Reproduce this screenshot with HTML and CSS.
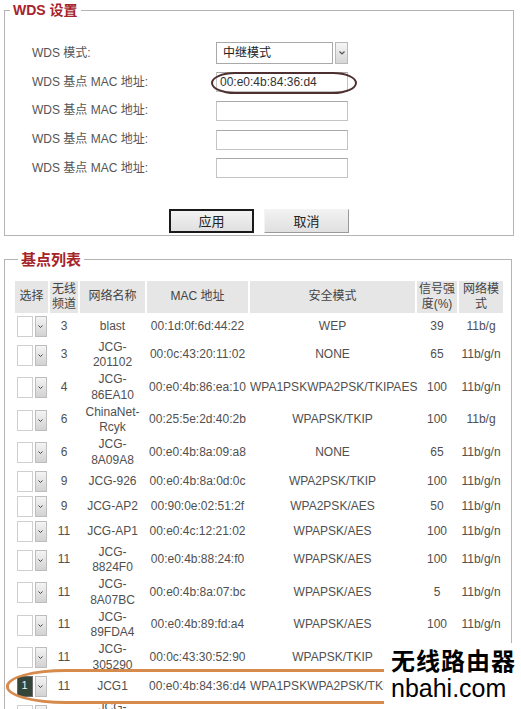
FILE: index.html
```html
<!DOCTYPE html>
<html lang="zh-CN">
<head>
<meta charset="utf-8">
<title>WDS 设置</title>
<link rel="stylesheet" href="styles.css">
</head>
<body>
<div class="page">
  <fieldset class="box box-wds">
    <legend class="legend">WDS 设置</legend>
    <div class="form">
      <span class="lbl">WDS 模式:</span>
      <span class="ctl"><span class="select"><span class="select-val">中继模式</span></span><span class="select-btn"><svg width="6" height="4" viewBox="0 0 6 4"><path d="M0.5 0.5 L3 3 L5.5 0.5" fill="none" stroke="#555" stroke-width="1.2"/></svg></span></span>
      <span class="lbl">WDS 基点 MAC 地址:</span>
      <span class="ctl"><span class="input">00:e0:4b:84:36:d4</span></span>
      <span class="lbl">WDS 基点 MAC 地址:</span>
      <span class="ctl"><span class="input"></span></span>
      <span class="lbl">WDS 基点 MAC 地址:</span>
      <span class="ctl"><span class="input"></span></span>
      <span class="lbl">WDS 基点 MAC 地址:</span>
      <span class="ctl"><span class="input"></span></span>
    </div>
    <div class="actions">
      <button class="btn btn-focus" type="button">应用</button>
      <button class="btn" type="button">取消</button>
    </div>
  </fieldset>

  <fieldset class="box box-list">
    <legend class="legend legend-lg">基点列表</legend>
    <table class="ap-table">
      <colgroup>
        <col class="c-sel"><col class="c-ch"><col class="c-name"><col class="c-mac"><col class="c-sec"><col class="c-sig"><col class="c-mode">
      </colgroup>
      <thead>
        <tr><th>选择</th><th>无线<br>频道</th><th>网络名称</th><th>MAC 地址</th><th>安全模式</th><th>信号强<br>度(%)</th><th>网络模<br>式</th></tr>
      </thead>
      <tbody>
        <tr><td><span class="rsel"><span class="rbox"></span><span class="rbtn"><svg width="5" height="3" viewBox="0 0 5 3"><path d="M0.5 0.5 L2.5 2.5 L4.5 0.5" fill="none" stroke="#444" stroke-width="1"/></svg></span></span></td><td>3</td><td>blast</td><td>00:1d:0f:6d:44:22</td><td>WEP</td><td>39</td><td>11b/g</td></tr>
        <tr><td><span class="rsel"><span class="rbox"></span><span class="rbtn"><svg width="5" height="3" viewBox="0 0 5 3"><path d="M0.5 0.5 L2.5 2.5 L4.5 0.5" fill="none" stroke="#444" stroke-width="1"/></svg></span></span></td><td>3</td><td>JCG-201102</td><td>00:0c:43:20:11:02</td><td>NONE</td><td>65</td><td>11b/g/n</td></tr>
        <tr><td><span class="rsel"><span class="rbox"></span><span class="rbtn"><svg width="5" height="3" viewBox="0 0 5 3"><path d="M0.5 0.5 L2.5 2.5 L4.5 0.5" fill="none" stroke="#444" stroke-width="1"/></svg></span></span></td><td>4</td><td>JCG-86EA10</td><td>00:e0:4b:86:ea:10</td><td class="nowrap">WPA1PSKWPA2PSK/TKIPAES</td><td>100</td><td>11b/g/n</td></tr>
        <tr><td><span class="rsel"><span class="rbox"></span><span class="rbtn"><svg width="5" height="3" viewBox="0 0 5 3"><path d="M0.5 0.5 L2.5 2.5 L4.5 0.5" fill="none" stroke="#444" stroke-width="1"/></svg></span></span></td><td>6</td><td>ChinaNet-Rcyk</td><td>00:25:5e:2d:40:2b</td><td>WPAPSK/TKIP</td><td>100</td><td>11b/g</td></tr>
        <tr><td><span class="rsel"><span class="rbox"></span><span class="rbtn"><svg width="5" height="3" viewBox="0 0 5 3"><path d="M0.5 0.5 L2.5 2.5 L4.5 0.5" fill="none" stroke="#444" stroke-width="1"/></svg></span></span></td><td>6</td><td>JCG-8A09A8</td><td>00:e0:4b:8a:09:a8</td><td>NONE</td><td>65</td><td>11b/g/n</td></tr>
        <tr><td><span class="rsel"><span class="rbox"></span><span class="rbtn"><svg width="5" height="3" viewBox="0 0 5 3"><path d="M0.5 0.5 L2.5 2.5 L4.5 0.5" fill="none" stroke="#444" stroke-width="1"/></svg></span></span></td><td>9</td><td>JCG-926</td><td>00:e0:4b:8a:0d:0c</td><td>WPA2PSK/TKIP</td><td>100</td><td>11b/g/n</td></tr>
        <tr><td><span class="rsel"><span class="rbox"></span><span class="rbtn"><svg width="5" height="3" viewBox="0 0 5 3"><path d="M0.5 0.5 L2.5 2.5 L4.5 0.5" fill="none" stroke="#444" stroke-width="1"/></svg></span></span></td><td>9</td><td>JCG-AP2</td><td>00:90:0e:02:51:2f</td><td>WPA2PSK/AES</td><td>50</td><td>11b/g/n</td></tr>
        <tr><td><span class="rsel"><span class="rbox"></span><span class="rbtn"><svg width="5" height="3" viewBox="0 0 5 3"><path d="M0.5 0.5 L2.5 2.5 L4.5 0.5" fill="none" stroke="#444" stroke-width="1"/></svg></span></span></td><td>11</td><td>JCG-AP1</td><td>00:e0:4c:12:21:02</td><td>WPAPSK/AES</td><td>100</td><td>11b/g/n</td></tr>
        <tr><td><span class="rsel"><span class="rbox"></span><span class="rbtn"><svg width="5" height="3" viewBox="0 0 5 3"><path d="M0.5 0.5 L2.5 2.5 L4.5 0.5" fill="none" stroke="#444" stroke-width="1"/></svg></span></span></td><td>11</td><td>JCG-8824F0</td><td>00:e0:4b:88:24:f0</td><td>WPAPSK/AES</td><td>100</td><td>11b/g/n</td></tr>
        <tr><td><span class="rsel"><span class="rbox"></span><span class="rbtn"><svg width="5" height="3" viewBox="0 0 5 3"><path d="M0.5 0.5 L2.5 2.5 L4.5 0.5" fill="none" stroke="#444" stroke-width="1"/></svg></span></span></td><td>11</td><td>JCG-8A07BC</td><td>00:e0:4b:8a:07:bc</td><td>WPAPSK/AES</td><td>5</td><td>11b/g/n</td></tr>
        <tr><td><span class="rsel"><span class="rbox"></span><span class="rbtn"><svg width="5" height="3" viewBox="0 0 5 3"><path d="M0.5 0.5 L2.5 2.5 L4.5 0.5" fill="none" stroke="#444" stroke-width="1"/></svg></span></span></td><td>11</td><td>JCG-89FDA4</td><td>00:e0:4b:89:fd:a4</td><td>WPAPSK/AES</td><td>100</td><td>11b/g/n</td></tr>
        <tr><td><span class="rsel"><span class="rbox"></span><span class="rbtn"><svg width="5" height="3" viewBox="0 0 5 3"><path d="M0.5 0.5 L2.5 2.5 L4.5 0.5" fill="none" stroke="#444" stroke-width="1"/></svg></span></span></td><td>11</td><td>JCG-305290</td><td>00:0c:43:30:52:90</td><td>WPAPSK/TKIP</td><td>100</td><td>11b/g/n</td></tr>
        <tr><td><span class="rsel"><span class="rbox rbox-on">1</span><span class="rbtn"><svg width="5" height="3" viewBox="0 0 5 3"><path d="M0.5 0.5 L2.5 2.5 L4.5 0.5" fill="none" stroke="#444" stroke-width="1"/></svg></span></span></td><td>11</td><td>JCG1</td><td>00:e0:4b:84:36:d4</td><td class="nowrap">WPA1PSKWPA2PSK/TKIPAES</td><td>100</td><td>11b/g/n</td></tr>
        <tr><td><span class="rsel"><span class="rbox"></span><span class="rbtn"><svg width="5" height="3" viewBox="0 0 5 3"><path d="M0.5 0.5 L2.5 2.5 L4.5 0.5" fill="none" stroke="#444" stroke-width="1"/></svg></span></span></td><td>11</td><td>JCG-8A0B1C</td><td>00:e0:4b:8a:0b:1c</td><td>WPAPSK/AES</td><td>100</td><td>11b/g/n</td></tr>
      </tbody>
    </table>
  </fieldset>

  <div class="mark mark-mac"></div>
  <div class="mark mark-row"></div>
  <div class="watermark">
    <div class="wm-cn">无线路由器</div>
    <div class="wm-en">nbahi.com</div>
  </div>
</div>
</body>
</html>
```

FILE: styles.css
```css
* { box-sizing: border-box; }
html, body { margin: 0; padding: 0; background: #fff; }
body {
  font-family: "Liberation Sans", "Noto Sans CJK SC", sans-serif;
  font-size: 12px;
  color: #4d4d4d;
}
.page { position: relative; width: 521px; height: 709px; overflow: hidden; }

.box {
  border: 1px solid #b4b4b4;
  margin: 2px 7px 0 4px;
  padding: 0;
  min-width: 0;
}
.legend {
  margin-left: 5px;
  padding: 0 3px;
  font-size: 14px;
  line-height: 16px;
  font-weight: bold;
  color: #a5242a;
}
.legend-lg { font-size: 15px; line-height: 18px; }

.form {
  display: grid;
  grid-template-columns: 184px 132px;
  grid-auto-rows: 28.75px;
  align-items: center;
  padding: 21px 0 0 27px;
}
.lbl { color: #555; white-space: nowrap; line-height: 15px; }
.ctl { display: flex; align-items: center; }
.select {
  width: 117px;
  height: 22px;
  border: 1px solid #a9a9a9;
  background: #fff;
  display: flex;
  align-items: center;
  padding-left: 6px;
  color: #222;
}
.select-val { line-height: 16px; }
.select-btn {
  margin-left: 2px;
  width: 13px;
  height: 22px;
  border: 1px solid #b9b9b9;
  background: linear-gradient(#f6f6f6, #d6d6d6);
  display: flex;
  align-items: center;
  justify-content: center;
}
.input {
  width: 132px;
  height: 20px;
  border: 1px solid #c4c4c4;
  border-top-color: #a8a8a8;
  background: #fff;
  color: #333;
  padding-left: 3px;
  line-height: 18px;
  font-size: 12px;
}

.actions {
  display: flex;
  justify-content: center;
  gap: 10px;
  margin-top: 26px;
  padding-bottom: 2px;
}
.btn {
  width: 85px;
  height: 24px;
  padding: 0;
  font-family: "Liberation Sans", "Noto Sans CJK SC", sans-serif;
  font-size: 13px;
  color: #222;
  background: linear-gradient(#f2f2f2, #e0e0e0);
  border: 1px solid;
  border-color: #f4f4f4 #9a9a9a #9a9a9a #f4f4f4;
}
.btn-focus { border: 2px solid #1a1a1a; }

.box-list { margin-top: 15px; margin-right: 9px; padding: 10px 0 0 8px; }
.ap-table {
  table-layout: fixed;
  border-collapse: separate;
  border-spacing: 2px;
  width: 492px;
}
.c-sel { width: 33px; }
.c-ch { width: 28px; }
.c-name { width: 65px; }
.c-mac { width: 101px; }
.c-sec { width: 165px; }
.c-sig { width: 40px; }
.c-mode { width: 44px; }
.ap-table th {
  background: #e6e6e6;
  font-weight: normal;
  color: #444;
  padding: 1px 0;
  line-height: 15px;
  text-align: center;
  vertical-align: middle;
}
.ap-table td {
  padding: 0;
  height: 23px;
  line-height: 15.25px;
  text-align: center;
  vertical-align: middle;
  color: #505050;
}
.ap-table td.nowrap { white-space: nowrap; overflow: visible; }

.rsel { display: inline-flex; gap: 2px; height: 21px; vertical-align: middle; }
.rbox {
  width: 16px;
  height: 21px;
  border: 1px solid #cfcfcf;
  background: #fff;
  font-size: 11px;
  line-height: 17px;
  text-align: center;
}
.rbox-on { background: #34453a; color: #f2f2f2; border-color: #6a6a6a; }
.rbtn {
  width: 12px;
  height: 21px;
  border: 1px solid #bdbdbd;
  background: linear-gradient(#f4f4f4, #d2d2d2);
  display: flex;
  align-items: center;
  justify-content: center;
}

.mark { position: absolute; pointer-events: none; }
.mark-mac {
  left: 211px; top: 72px; width: 146px; height: 22px;
  border: 2px solid #4e3030;
  border-radius: 24px / 11px;
}
.mark-row {
  left: 6px; top: 669px; width: 440px; height: 35px;
  border: 3px solid #d68b4d;
  border-radius: 60px / 17px;
}
.watermark {
  position: absolute;
  left: 384px; top: 643px; width: 137px; height: 66px;
  background: #fff;
  padding: 3px 0 0 7px;
  color: #000;
}
.wm-cn {
  font-family: "Noto Sans CJK SC", sans-serif;
  font-weight: 700;
  font-size: 24px;
  line-height: 28px;
  letter-spacing: 1px;
}
.wm-en {
  font-family: "Liberation Sans", sans-serif;
  font-size: 25px;
  line-height: 28px;
  margin-top: 0;
}
```
